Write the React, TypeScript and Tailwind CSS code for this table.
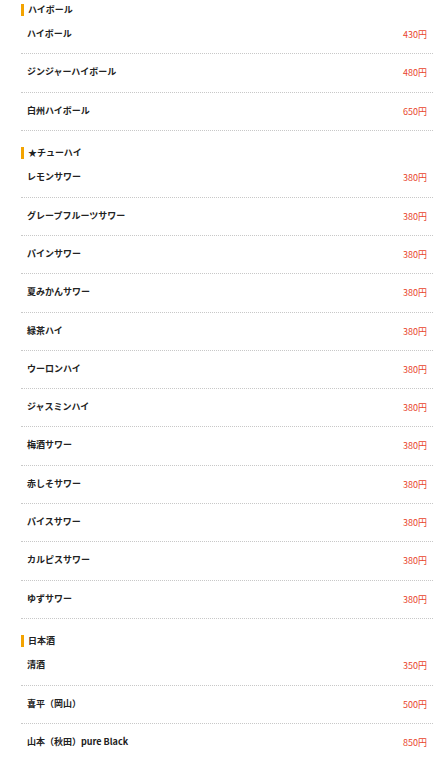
import React from "react";

type Item = { name: string; price: string };
type Section = { title: string; items: Item[] };

const menu: Section[] = [
  {
    title: "ハイボール",
    items: [
      { name: "ハイボール", price: "430円" },
      { name: "ジンジャーハイボール", price: "480円" },
      { name: "白州ハイボール", price: "650円" },
    ],
  },
  {
    title: "★チューハイ",
    items: [
      { name: "レモンサワー", price: "380円" },
      { name: "グレープフルーツサワー", price: "380円" },
      { name: "パインサワー", price: "380円" },
      { name: "夏みかんサワー", price: "380円" },
      { name: "緑茶ハイ", price: "380円" },
      { name: "ウーロンハイ", price: "380円" },
      { name: "ジャスミンハイ", price: "380円" },
      { name: "梅酒サワー", price: "380円" },
      { name: "赤しそサワー", price: "380円" },
      { name: "パイスサワー", price: "380円" },
      { name: "カルピスサワー", price: "380円" },
      { name: "ゆずサワー", price: "380円" },
    ],
  },
  {
    title: "日本酒",
    items: [
      { name: "清酒", price: "350円" },
      { name: "喜平（岡山）", price: "500円" },
      { name: "山本（秋田）pure Black", price: "850円" },
    ],
  },
];

export default function App() {
  return (
    <div className="bg-white w-[442px] pt-[4px] pl-[21px] pr-[9px] font-['Noto_Sans_CJK_JP',sans-serif]">
      {menu.map((section, si) => (
        <div key={section.title} className={si === 0 ? "" : "mt-[16.5px]"}>
          {/* section heading */}
          <div className="flex items-center h-[12px]">
            <span className="w-[3px] h-full bg-[#f3a300]" />
            <span className="ml-[4px] text-[9px] leading-none font-bold text-[#222] -mt-[2px]">
              {section.title}
            </span>
          </div>
          <ul>
            {section.items.map((item) => (
              <li
                key={item.name}
                className="h-[38.3px] flex justify-between items-start px-[6px] border-b border-dotted border-[#c8c8c8]"
              >
                <span className="mt-[13px] text-[9px] leading-[10px] font-bold text-[#222]">
                  {item.name}
                </span>
                <span className="mt-[14px] text-[9px] leading-[10px] text-[#e8452c]">
                  {item.price}
                </span>
              </li>
            ))}
          </ul>
        </div>
      ))}
    </div>
  );
}
